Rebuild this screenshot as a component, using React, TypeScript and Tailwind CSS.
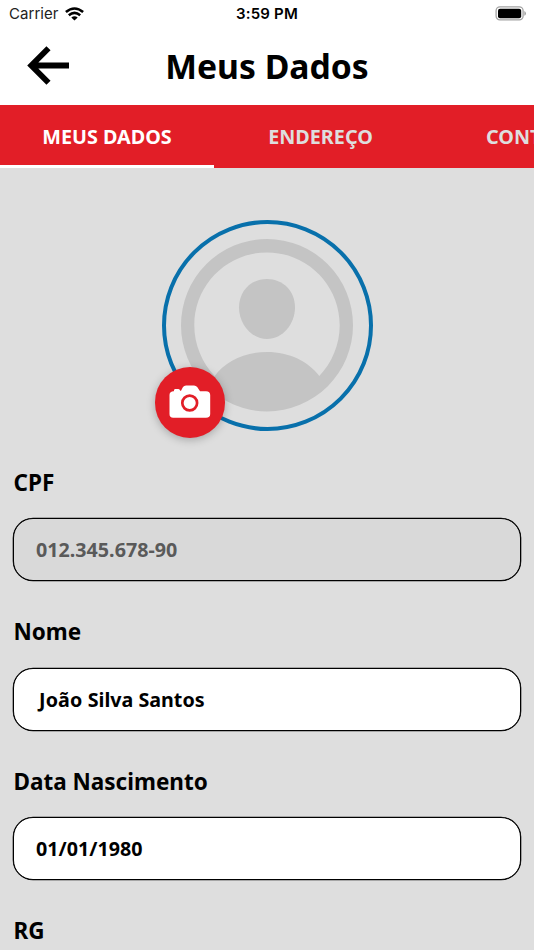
import React from "react";

type FieldProps = { label: string; value: React.ReactNode; disabled?: boolean; inset?: string };

function Field({ label, value, disabled = false, inset = "pl-[22px]" }: FieldProps) {
  return (
    <div className="h-[149.6px] shrink-0">
      <div className="h-[53px] pt-[1.6px] pl-[0.5px] text-[22.5px] leading-[32px] font-bold text-black">{label}</div>
      <div
        className={`flex h-[63px] items-center rounded-[20px] border border-black pt-[0.8px] text-[19.7px] font-bold shadow-[0_0_0_0.3px_#000] ${inset} ${
          disabled ? "bg-[#d9d9d9] text-[#5a5a5a]" : "bg-white text-black"
        }`}
      >
        {value}
      </div>
    </div>
  );
}

function StatusBar() {
  return (
    <div className="grid h-[27px] grid-cols-3 items-center px-[9px] font-['Inter',sans-serif] text-[15px] text-black">
      <div className="flex items-center gap-[6px]">
        <span className="pt-[2px] tracking-[0.05px] text-[#222]">Carrier</span>
        <svg width="19" height="14" viewBox="0 0 19 14" fill="none" stroke="#000" strokeWidth="2.6">
          <path d="M.9 5Q9.5-2 18.1 5" />
          <path d="M3.8 8.2Q9.5 3.7 15.2 8.2" />
          <path d="M6.3 10.6Q9.5 8.1 12.7 10.6L9.5 13.6Z" fill="#000" stroke="none" />
        </svg>
      </div>
      <div className="pt-[2px] text-center font-semibold tracking-[0.2px]">3:59 PM</div>
      <div className="-mr-[1px] flex justify-end">
        <svg width="31" height="15" viewBox="0 0 31 15">
          <rect x="1.1" y=".9" width="27" height="13" rx="3.8" fill="none" stroke="#a3a3a3" strokeWidth="1.3" />
          <rect x="3" y="2.8" width="23.2" height="9.4" rx="2" />
          <path d="M29.4 5v4.8q1.5-.8 1.5-2.4T29.4 5" fill="#999" />
        </svg>
      </div>
    </div>
  );
}

export default function App() {
  return (
    <div className="flex h-[950px] w-[534px] flex-col overflow-hidden bg-[#dedede] font-['Noto_Sans','Open_Sans',sans-serif]">
      <header className="h-[105px] shrink-0 bg-white">
        <StatusBar />
        <div className="grid h-[78px] grid-cols-[120px_1fr_120px] items-center">
          <svg className="ml-[27px]" width="43" height="40" viewBox="0 0 43 40" fill="none" stroke="#000" strokeWidth="5.8">
            <path d="M21.5 2.2L4.3 19.5L21.5 36.8M4.5 19.5H42" />
          </svg>
          <h1 className="text-center text-[33.7px] leading-[48px] font-bold whitespace-nowrap text-black">Meus Dados</h1>
        </div>
      </header>

      <nav className="flex h-[63px] shrink-0 overflow-hidden bg-[#e21e27] text-[19.8px] font-bold">
        <div className="flex w-[214px] shrink-0 items-center justify-center border-b-[3px] border-white pt-[4px] text-white">MEUS DADOS</div>
        <div className="flex w-[213px] shrink-0 items-center justify-center pt-[1px] text-[#dedede]">ENDEREÇO</div>
        <div className="flex w-[213px] shrink-0 items-center pt-[1px] pl-[59px] text-[#dedede]">CONTATO</div>
      </nav>

      <div className="flex h-[296.5px] shrink-0 justify-center pt-[52px]">
        <div className="relative h-[211px] w-[211px] rounded-full border-4 border-[#0870ab]">
          <svg className="absolute top-[15px] left-[15.5px]" width="172" height="173" viewBox="0 0 172 173" fill="#c4c4c4">
            <path
              fillRule="evenodd"
              d="M86 0A86 86.2 0 1 1 86 172.4A86 86.2 0 1 1 86 0ZM86 13.4C46 13.4 13.3 46 13.3 86.2C13.3 105.5 21 123.5 33.7 137C44.5 122.5 63.5 113 86 113C108.5 113 127.5 122.5 138.3 137C151 123.5 158.7 105.5 158.7 86.2C158.7 46 126 13.4 86 13.4Z"
            />
            <path d="M86 40C102 40 114 52 114 68.5C114 85 101.5 100 86 100C70.5 100 58 85 58 68.5C58 52 70 40 86 40Z" />
          </svg>
          <button className="absolute top-[143px] left-[-11px] flex h-[70.5px] w-[70.5px] items-center justify-center rounded-full bg-[#e21e27] shadow-[0_2px_8px_rgba(0,0,0,0.25)]">
            <svg width="42" height="34" viewBox="0 0 42 34">
              <path
                d="M4 6.2H5V5Q5.3 4.1 6.5 4.1H9.4Q10.8 4.1 11.2 5.8H12L14 2Q15 .5 17 .5H25Q27 .5 28.2 2L31 6.2H37Q41.2 6.2 41.2 10V29Q41.2 32.8 37 32.8H4.2Q.5 32.8.5 29V10Q.5 6.6 4 6.2Z"
                fill="#fff"
              />
              <circle cx="20.7" cy="18" r="7.4" fill="#fff" stroke="#e21e27" strokeWidth="2.7" />
            </svg>
          </button>
        </div>
      </div>

      <main className="flex flex-col px-[13px] pt-[0.5px]">
        <Field label="CPF" value="012.345.678-90" disabled />
        <Field
          label="Nome"
          inset="pl-[25px]"
          value={
            <span className="whitespace-pre">
              <span className="tracking-[0.15px]">João</span> Silva Santos
            </span>
          }
        />
        <Field label="Data Nascimento" value="01/01/1980" />
        <Field label="RG" value="" />
      </main>
    </div>
  );
}
